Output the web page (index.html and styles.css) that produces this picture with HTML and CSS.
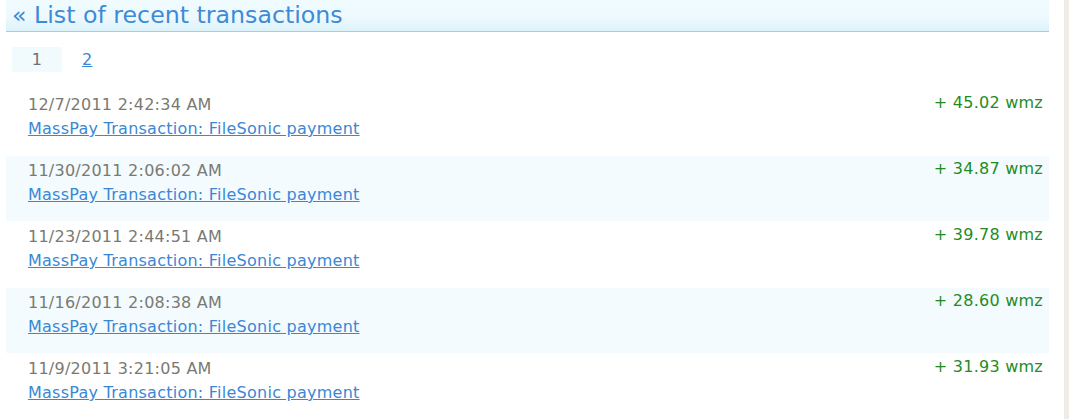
FILE: index.html
```html
<!DOCTYPE html>
<html>
<head>
<meta charset="utf-8">
<link rel="stylesheet" href="styles.css">
</head>
<body>
<div class="page">
  <div class="main">
    <h1 class="title"><a href="#">« List of recent transactions</a></h1>
    <div class="pager">
      <span class="page-cur">1</span>
      <a class="page-link" href="#">2</a>
    </div>
    <div class="list">
      <div class="row">
        <div class="info">
          <div class="date">12/7/2011 2:42:34 AM</div>
          <a class="desc" href="#">MassPay Transaction: FileSonic payment</a>
        </div>
        <div class="amount">+ 45.02 wmz</div>
      </div>
      <div class="row alt">
        <div class="info">
          <div class="date">11/30/2011 2:06:02 AM</div>
          <a class="desc" href="#">MassPay Transaction: FileSonic payment</a>
        </div>
        <div class="amount">+ 34.87 wmz</div>
      </div>
      <div class="row">
        <div class="info">
          <div class="date">11/23/2011 2:44:51 AM</div>
          <a class="desc" href="#">MassPay Transaction: FileSonic payment</a>
        </div>
        <div class="amount">+ 39.78 wmz</div>
      </div>
      <div class="row alt">
        <div class="info">
          <div class="date">11/16/2011 2:08:38 AM</div>
          <a class="desc" href="#">MassPay Transaction: FileSonic payment</a>
        </div>
        <div class="amount">+ 28.60 wmz</div>
      </div>
      <div class="row">
        <div class="info">
          <div class="date">11/9/2011 3:21:05 AM</div>
          <a class="desc" href="#">MassPay Transaction: FileSonic payment</a>
        </div>
        <div class="amount">+ 31.93 wmz</div>
      </div>
    </div>
  </div>
  <div class="side"></div>
</div>
</body>
</html>
```
FILE: styles.css
```css
html, body {
  margin: 0;
  padding: 0;
  background: #ffffff;
  height: 100%;
}
body {
  font-family: "DejaVu Sans", Verdana, sans-serif;
  font-size: 16px;
  letter-spacing: 0.25px;
  overflow: hidden;
}
.page {
  display: flex;
  height: 419px;
}
.main {
  width: 1043px;
  margin-left: 6px;
}
.side {
  width: 5px;
  margin-left: 15px;
  background: #eeece4;
}
.title {
  margin: 0;
  height: 31px;
  border-bottom: 1px solid #a8cbe6;
  background: linear-gradient(#f0fbff 0%, #eef9fe 55%, #dcf2fa 100%);
  font-family: "DejaVu Sans", Verdana, sans-serif;
  font-weight: normal;
  font-size: 23.7px;
  letter-spacing: 0;
  line-height: 31px;
  padding-left: 6px;
}
.title a {
  color: #3d8bd6;
  text-decoration: none;
}
.pager {
  display: flex;
  align-items: center;
  margin-top: 15px;
  margin-left: 6px;
  height: 25px;
}
.page-cur {
  width: 50px;
  height: 25px;
  line-height: 25px;
  text-align: center;
  background: #f1fafd;
  color: #707070;
}
.page-link {
  margin-left: 20px;
  color: #3a87d4;
}
.list {
  margin-top: 18px;
}
.row {
  height: 65px;
  margin-bottom: 1px;
  display: flex;
  justify-content: space-between;
  align-items: flex-start;
}
.row.alt {
  background: #f3fbfe;
}
.info {
  padding-left: 22px;
  padding-top: 3px;
  line-height: 24px;
}
.date {
  color: #7a7a72;
}
.desc {
  color: #3a87d4;
}
.amount {
  color: #1f8c1f;
  padding-right: 6px;
  padding-top: 1px;
  line-height: 24px;
}
```
